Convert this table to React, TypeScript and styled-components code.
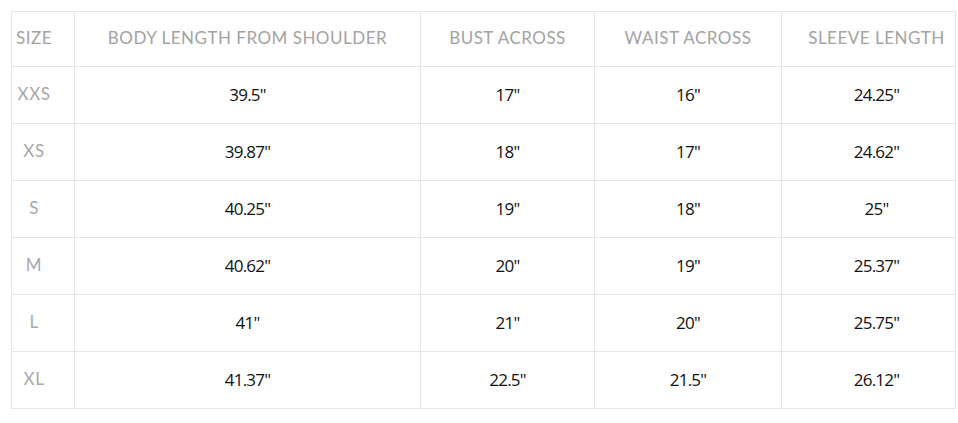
import React from 'react';
import styled, {createGlobalStyle} from "styled-components";

const GlobalStyle = createGlobalStyle`
  html, body {
    margin: 0;
    padding: 0;
    background: #fff;
  }
`

const columns = ['Size', 'Body length from shoulder', 'Bust across', 'Waist across', 'Sleeve length'];

const rows = [
    ['XXS', '39.5"', '17"', '16"', '24.25"'],
    ['XS', '39.87"', '18"', '17"', '24.62"'],
    ['S', '40.25"', '19"', '18"', '25"'],
    ['M', '40.62"', '20"', '19"', '25.37"'],
    ['L', '41"', '21"', '20"', '25.75"'],
    ['XL', '41.37"', '22.5"', '21.5"', '26.12"'],
];

const widths = [63, 346, 174, 187, 174];

const App = () => {
    return (
        <Page>
            <GlobalStyle/>
            <Table>
                <colgroup>
                    {widths.map((w, i) => <col key={i} style={{width: w}}/>)}
                </colgroup>
                <thead>
                <tr>
                    {columns.map((c, i) => (
                        <HeadCell key={c} $first={i === 0} $last={i === columns.length - 1}>{c}</HeadCell>
                    ))}
                </tr>
                </thead>
                <tbody>
                {rows.map(r => (
                    <tr key={r[0]}>
                        <SizeCell>{r[0]}</SizeCell>
                        {r.slice(1).map((v, i) => (
                            <ValueCell key={i} $last={i === 3}>{v}</ValueCell>
                        ))}
                    </tr>
                ))}
                </tbody>
            </Table>
        </Page>
    );
};

export default App;


const Page = styled.div`
  padding: 11px 0 0 11px;
`

const Table = styled.table`
  border-collapse: collapse;
  table-layout: fixed;
  width: 945px;
  border: 1px solid #e6e6e6;
`

const Cell = styled.td`
  border: 1px solid #e6e6e6;
  text-align: center;
  vertical-align: middle;
  padding: 0;
  box-sizing: border-box;
  line-height: 20px;
`

const HeadCell = styled(Cell).attrs({as: 'th'})<{ $first?: boolean, $last?: boolean }>`
  height: 55px;
  font-family: Lato, "Liberation Sans", sans-serif;
  font-weight: 400;
  font-size: 17px;
  letter-spacing: 0.5px;
  text-transform: uppercase;
  color: #a3a3a3;
  white-space: nowrap;
  padding: ${p => p.$first ? '0 22px 3px 4px' : p.$last ? '0 0 3px 16px' : '0 0 3px 0'};
`

const SizeCell = styled(Cell)`
  height: 57px;
  font-family: Lato, "Liberation Sans", sans-serif;
  font-size: 17px;
  letter-spacing: 0.5px;
  color: #a8a8a8;
  padding: 0 22px 2px 4px;
`

const ValueCell = styled(Cell)<{ $last?: boolean }>`
  height: 57px;
  font-family: "Open Sans", "Liberation Sans", sans-serif;
  font-size: 17px;
  letter-spacing: -0.8px;
  color: #111;
  padding: ${p => p.$last ? '0 0 0 16px' : '0'};
`
